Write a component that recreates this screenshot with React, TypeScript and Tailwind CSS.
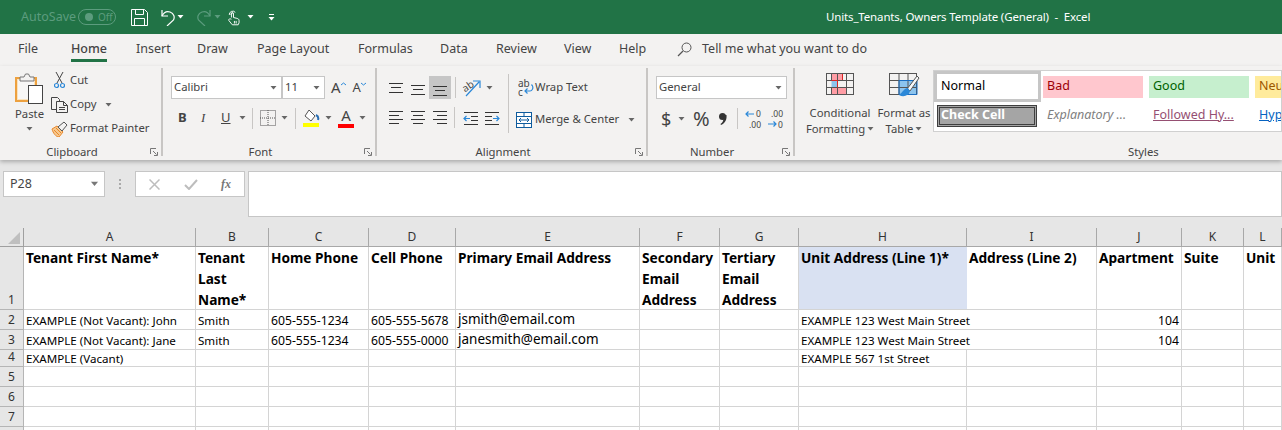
import React from "react";

const Caret = ({ c = "#666666", className = "" }: { c?: string; className?: string }) => (
  <svg width="7" height="4" viewBox="0 0 7 4" className={`shrink-0 ${className}`}><path d="M0.5 0h6L3.5 3.5z" fill={c} /></svg>
);

const Launcher = () => (
  <svg width="8" height="8" viewBox="0 0 8 8" fill="none" stroke="#777777" strokeWidth="1">
    <path d="M0.5 6V0.5H6" /><path d="M3 3l3.5 3.5M7.5 4v3.5H4" />
  </svg>
);

const Group = ({ w, label, children }: { w: string; label: string; children: React.ReactNode }) => (
  <div className={`${w} h-[88px] border-r-2 border-[#c8c6c4] flex flex-col shrink-0`}>
    <div className="h-[76px] flex overflow-hidden shrink-0">{children}</div>
    <div className="grid grid-cols-[1fr_auto_1fr_17px] items-center h-[12px] pt-[4px] leading-[8px] text-[#444444] shrink-0">
      <span />
      <span>{label}</span>
      <span />
      <span className="justify-self-end mr-[3px] flex"><Launcher /></span>
    </div>
  </div>
);

const Lines = ({ l, h = 16 }: { l: [number, number, number][]; h?: number }) => (
  <svg width="16" height={h} viewBox={`0 0 16 ${h}`} stroke="#333333" strokeWidth="1">
    {l.map((a, i) => <path key={i} d={`M${a[0]} ${a[1] + 0.5}h${a[2]}`} />)}
  </svg>
);

const Sep = ({ className = "" }: { className?: string }) => <div className={`w-px shrink-0 bg-[#c8c6c4] ${className}`} />;

const SaveIcon = () => (
  <svg width="17" height="17" viewBox="0 0 17 17" fill="none" stroke="#ffffff" strokeWidth="1">
    <path d="M0.5 0.5h13l3 3v13H0.5z" /><path d="M4.5 0.5v5h8v-5" /><path d="M3.5 16.5v-7h10v7" />
  </svg>
);

const UndoIcon = ({ c, flip }: { c: string; flip?: boolean }) => (
  <svg width="15" height="17" viewBox="0 0 15 17" fill="none" stroke={c} strokeWidth="1.2" className={flip ? "-scale-x-100" : ""}>
    <path d="M1 1v6h6" /><path d="M1 7C3 3 6 2 9 3c4 1.500 5 5 3.500 8L6 17" />
  </svg>
);

const TouchIcon = () => (
  <svg width="12" height="17" viewBox="0 0 14 18" fill="none" stroke="#ffffff" strokeWidth="1.100">
    <path d="M1.500 6a4 4 0 0 1 7-3" />
    <path d="M3 5.500a2 2 0 0 1 3.500-1" />
    <path d="M4 9V4.500a1.200 1.200 0 0 1 2.400 0V9l4 1c1.500.4 2.500 1 2.500 2.500V15l-1 2.500H5L1 12.500c-.8-1.500 1-2.500 3-1.500" />
    <path d="M7.500 13v3M9.500 13v3" />
  </svg>
);

const PasteIcon = () => (
  <svg width="29" height="31" viewBox="0 0 29 31" fill="none">
    <rect x="1" y="5" width="20" height="23" fill="#fbe3bd" stroke="#eda13f" strokeWidth="2" />
    <rect x="3" y="7" width="16" height="19" fill="#f8f7f6" />
    <path d="M5 8V4h4l1.500-3h3L15 4h4v4z" fill="#f3f2f1" stroke="#777777" />
    <rect x="13.500" y="12.500" width="14" height="18" fill="#ffffff" stroke="#444444" />
  </svg>
);

const CutIcon = () => (
  <svg width="11" height="17" viewBox="0 0 11 17" fill="none">
    <path d="M3 11L9 0M8 11L2 0" stroke="#444444" />
    <circle cx="2.500" cy="13.500" r="2" stroke="#2b88d8" strokeWidth="1.200" />
    <circle cx="8.500" cy="13.500" r="2" stroke="#2b88d8" strokeWidth="1.200" />
  </svg>
);

const CopyIcon = () => (
  <svg width="17" height="16" viewBox="0 0 17 16" fill="none" stroke="#444444">
    <path d="M5.500 12.500H.5V.5h6l2 2V5" />
    <path d="M5.500 4.500h7l4 4v7h-11z" />
    <path d="M12.500 4.500v4h4M8 10.500h6M8 12.500h6" />
  </svg>
);

const PainterIcon = () => (
  <svg width="17" height="16" viewBox="0 0 17 16" fill="none">
    <path d="M1 8l5-3 6 6-4 5c-3 0-6-4-7-8z" fill="#f6c88e" stroke="#e8872b" />
    <path d="M7 6l6-5 3 3-5 6z" fill="#f3f2f1" stroke="#555555" />
    <path d="M3 9l5 5M5 7l5 5" stroke="#e8872b" />
  </svg>
);

const BorderIcon = () => (
  <svg width="16" height="16" viewBox="0 0 16 16" fill="none" stroke="#555555" strokeDasharray="1 1">
    <rect x=".5" y=".5" width="15" height="15" /><path d="M8 0v16M0 8h16" />
  </svg>
);

const FillIcon = () => (
  <svg width="17" height="18" viewBox="0 0 17 18" fill="none">
    <path d="M6 1l6 6-4 5-6-5z" fill="#ffffff" stroke="#555555" />
    <path d="M13 6c2 1 3 2 2 5" stroke="#2b6fb3" strokeWidth="2" />
    <rect x="0" y="14" width="16" height="4" fill="#ffff00" />
  </svg>
);

const OrientIcon = () => (
  <svg width="18" height="18" viewBox="0 0 18 18" fill="none" className="overflow-visible">
    <text x="0" y="11" fontSize="10" fill="#444444" fontFamily="Noto Sans" transform="rotate(-35 5 9)">ab</text>
    <path d="M3 17L16 3M10 2h7v7" stroke="#2b88d8" strokeWidth="1.200" />
  </svg>
);

const WrapIcon = () => (
  <svg width="16" height="20" viewBox="0 0 16 20" fill="none">
    <text x="0" y="9" fontSize="10" fill="#444444" fontFamily="Noto Sans">ab</text>
    <text x="0" y="18" fontSize="10" fill="#444444" fontFamily="Noto Sans">c</text>
    <path d="M13 7h1c2 3 0 6-2 6H7M9.500 10.500L7 13l2.500 2.500" stroke="#2b88d8" strokeWidth="1.200" />
  </svg>
);

const MergeIcon = () => (
  <svg width="16" height="16" viewBox="0 0 16 16" fill="none">
    <rect x=".5" y=".5" width="15" height="15" fill="#ffffff" stroke="#0e5c9e" />
    <path d="M0 4.500h16M0 11.500h16M8 0v4M8 12v4" stroke="#0e5c9e" />
    <path d="M3 8h10M5 6L3 8l2 2M11 6l2 2-2 2" stroke="#0e5c9e" />
  </svg>
);

const IndentIcon = ({ flip }: { flip?: boolean }) => (
  <svg width="15" height="14" viewBox="0 0 15 14" fill="none" className={flip ? "-scale-x-100" : ""}>
    <path d="M1 1.500h14M8 5.500h7M8 9.500h7M1 13.500h14" stroke="#333333" />
    <path d="M7 7.500H1M3.500 5L1 7.500 3.500 10" stroke="#2b88d8" strokeWidth="1.200" />
  </svg>
);

const DecIcon = ({ up }: { up?: boolean }) => (
  <svg width="18" height="20" viewBox="0 0 18 20" fill="none">
    <text x={up ? 4 : 11} y="8" fontSize="8.500" fill="#444444" fontFamily="Noto Sans">{up ? ".00" : "0"}</text>
    <text x={up ? 11 : 4} y="19" fontSize="8.500" fill="#444444" fontFamily="Noto Sans">{up ? "0" : ".00"}</text>
    {up
      ? <path d="M1 15h8M6.500 12.500L9 15l-2.500 2.500" stroke="#2b88d8" strokeWidth="1.200" />
      : <path d="M9 5H1M3.500 2.500L1 5l2.500 2.500" stroke="#2b88d8" strokeWidth="1.200" />}
  </svg>
);

const CommaIcon = () => (
  <svg width="8" height="12" viewBox="0 0 8 12" fill="#333333">
    <circle cx="3.500" cy="3.500" r="3.500" />
    <path d="M4 2h3.500C8 6 6.500 10 2 12l-.5-1C4 9.500 4.500 7 4.500 5z" />
  </svg>
);

const CondIcon = () => (
  <svg width="28" height="23" viewBox="0 0 28 23" fill="none">
    <rect x="5.500" y=".5" width="11" height="7" fill="#ff9da5" stroke="#dc2626" />
    <rect x="5.500" y="7.500" width="6" height="7" fill="#8cc4ee" />
    <rect x="5.500" y="14.500" width="15" height="7" fill="#ff9da5" stroke="#dc2626" />
    <rect x=".5" y=".5" width="27" height="21" stroke="#555555" />
    <path d="M5.500 0v8M5.500 14v8M11.500 0v22M20.500 0v22M0 7.500h28M0 14.500h28" stroke="#555555" />
    <path d="M5.500 7.500h6v7" stroke="#dc2626" />
  </svg>
);

const TableIcon = () => (
  <svg width="31" height="27" viewBox="0 0 31 27" fill="none">
    <rect x="10" y="7" width="18" height="15" fill="#8cc4ee" />
    <rect x=".5" y=".5" width="27" height="21" stroke="#555555" />
    <path d="M10 0v22M19 0v22M0 7.500h28M0 14.500h28" stroke="#555555" />
    <path d="M10 7.500h18v14H10z" stroke="#1b6ec2" />
    <path d="M18 16L28 3l2 2-9 13z" fill="#f8f8f8" stroke="#555555" />
    <path d="M19 15c-4 0-5 4-9 7 5 3 10 0 11-4z" fill="#2b88d8" />
  </svg>
);

const TITLE_DIM = "#5c9c7e";

const TitleBar = () => (
  <div className="h-[34px] bg-[#217346] flex items-center shrink-0 text-white">
    <span className="ml-[21px] w-[57px] text-[12.500px] text-[#5c9c7e]">AutoSave</span>
    <div className="w-[38px] h-[16px] rounded-full border border-[#5c9c7e] flex items-center pl-[6px] text-[10px] text-[#5c9c7e]">
      <span className="w-[8px] h-[8px] rounded-full bg-[#5c9c7e] mr-[5px]" />Off
    </div>
    <div className="ml-[15px] flex"><SaveIcon /></div>
    <div className="ml-[13px] flex"><UndoIcon c="#ffffff" /></div>
    <Caret c="#ffffff" className="ml-[1px]" />
    <div className="ml-[12px] flex"><UndoIcon c={TITLE_DIM} flip /></div>
    <Caret c={TITLE_DIM} className="ml-[3px]" />
    <div className="ml-[7px] flex"><TouchIcon /></div>
    <Caret c="#ffffff" className="ml-[7px]" />
    <div className="ml-[14px] flex flex-col items-center gap-[2px]">
      <div className="w-[5px] h-px bg-white" />
      <Caret c="#ffffff" />
    </div>
    <span className="ml-[551px] text-[11.500px] tracking-[-0.15px] whitespace-pre">Units_Tenants, Owners Template (General)  -  Excel</span>
  </div>
);

const tabs: [string, string][] = [
  ["File", "w-[53px]"], ["Home", "w-[65px]"], ["Insert", "w-[61px]"], ["Draw", "w-[60px]"],
  ["Page Layout", "w-[101px]"], ["Formulas", "w-[82px]"], ["Data", "w-[56px]"], ["Review", "w-[68px]"],
  ["View", "w-[55px]"], ["Help", "w-[58px]"],
];

const Tabs = () => (
  <div className="h-[32px] bg-[#f3f2f1] flex items-start pl-[18px] text-[12.500px] text-[#444444] shrink-0">
    {tabs.map(([t, w]) => (
      <div key={t} className={`${w} h-[30px] flex items-center`}>
        {t === "Home" ? (
          <span className="self-start h-[28px] flex items-center font-medium border-b-[3px] border-[#217346] pt-[5px]">Home</span>
        ) : t}
      </div>
    ))}
    <div className="h-[30px] flex items-center">
      <svg width="15" height="15" viewBox="0 0 15 15" fill="none" stroke="#555555" className="mr-[10px]">
        <circle cx="9.500" cy="5.500" r="4.500" /><path d="M6 9l-5 5" strokeWidth="1.300" />
      </svg>
      Tell me what you want to do
    </div>
  </div>
);

const Combo = ({ text, w }: { text: string; w: string }) => (
  <div className={`${w} h-[23px] bg-white border border-[#c6c6c6] flex items-center justify-between pl-[2px] pr-[4px] text-[#444444] shrink-0`}>
    <span>{text}</span><Caret />
  </div>
);

const Ribbon = () => (
  <div className="h-[94px] bg-[#f3f2f1] flex items-start pt-[2px] shrink-0 relative z-10 shadow-[0_2px_4px_rgba(0,0,0,0.25)] text-[11.300px] text-[#444444] whitespace-nowrap">
    <Group w="w-[163px]" label="Clipboard">
      <div className="ml-[14px] w-[31px] flex flex-col items-center pt-[5px]">
        <PasteIcon />
        <span className="mt-[2px] leading-[16px]">Paste</span>
        <Caret className="mt-[5px]" />
      </div>
      <div className="ml-[6px] pt-[4px] flex flex-col gap-[7px]">
        <div className="h-[17px] flex items-center"><div className="ml-[3px] w-[16px] flex"><CutIcon /></div>Cut</div>
        <div className="h-[17px] flex items-center"><div className="w-[19px] flex"><CopyIcon /></div>Copy<Caret className="ml-[9px]" /></div>
        <div className="h-[17px] flex items-center"><div className="w-[19px] flex"><PainterIcon /></div>Format Painter</div>
      </div>
    </Group>

    <Group w="w-[214px]" label="Font">
      <div className="pl-[8px] pt-[8px] flex flex-col">
        <div className="flex items-center">
          <Combo text="Calibri" w="w-[111px]" />
          <Combo text="11" w="w-[43px]" />
          <span className="ml-[6px] text-[15px] leading-[15px]">A</span>
          <svg width="5" height="4" viewBox="0 0 5 4" className="mb-[8px]"><path d="M0 3l2.500-2L5 3" stroke="#2b88d8" fill="none" /></svg>
          <span className="ml-[7px] text-[13px] leading-[15px]">A</span>
          <svg width="5" height="4" viewBox="0 0 5 4" className="mb-[8px]"><path d="M0 1l2.500 2L5 1" stroke="#2b88d8" fill="none" /></svg>
        </div>
        <div className="flex items-center h-[22px] mt-[8px]">
          <span className="ml-[7px] w-[23px] font-bold text-[13px]">B</span>
          <span className="w-[20px] italic text-[13px] font-['Liberation_Serif',serif]">I</span>
          <span className="w-[18px] underline text-[13px]">U</span>
          <Caret />
          <Sep className="h-[21px] ml-[6px]" />
          <div className="ml-[7px] flex"><BorderIcon /></div>
          <Caret className="ml-[5px]" />
          <Sep className="h-[21px] ml-[7px]" />
          <div className="ml-[7px] flex"><FillIcon /></div>
          <Caret className="ml-[5px]" />
          <div className="ml-[6px] w-[16px] flex flex-col items-center">
            <span className="text-[15px] leading-[15px] h-[15px]">A</span>
            <div className="w-[16px] h-[4px] bg-[#ff0000] mt-[1px]" />
          </div>
          <Caret className="ml-[5px]" />
        </div>
      </div>
    </Group>

    <Group w="w-[271px]" label="Alignment">
      <div className="ml-[11px] pt-[8px] flex flex-col w-[112px]">
        <div className="flex items-center h-[23px]">
          <div className="w-[22px] flex"><Lines l={[[1, 3, 14], [3, 7, 10], [1, 12, 14]]} /></div>
          <div className="w-[19px] flex"><Lines l={[[1, 6, 14], [3, 10, 10], [1, 15, 14]]} h={18} /></div>
          <div className="w-[22px] h-[23px] bg-[#c6c6c6] flex items-center justify-center"><Lines l={[[1, 6, 14], [3, 10, 10], [1, 15, 14]]} h={16} /></div>
          <Sep className="h-[21px] ml-[4px]" />
          <div className="ml-[7px] flex"><OrientIcon /></div>
          <Caret className="ml-[5px]" />
        </div>
        <div className="flex items-center h-[23px] mt-[7px]">
          <div className="w-[22px] flex"><Lines l={[[1, 1, 14], [1, 5, 10], [1, 9, 14], [1, 13, 10]]} /></div>
          <div className="w-[22px] flex"><Lines l={[[1, 1, 14], [3, 5, 10], [1, 9, 14], [3, 13, 10]]} /></div>
          <div className="w-[22px] flex"><Lines l={[[1, 1, 14], [5, 5, 10], [1, 9, 14], [5, 13, 10]]} /></div>
          <Sep className="h-[21px]" />
          <div className="ml-[8px] flex"><IndentIcon /></div>
          <div className="ml-[7px] flex"><IndentIcon flip /></div>
        </div>
      </div>
      <Sep className="h-[59px] mt-[6px] ml-[8px]" />
      <div className="ml-[7px] pt-[8px] flex flex-col">
        <div className="h-[23px] flex items-center"><div className="w-[17px] ml-[2px] flex"><WrapIcon /></div>Wrap Text</div>
        <div className="h-[23px] mt-[9px] flex items-center"><div className="w-[19px] flex"><MergeIcon /></div>Merge &amp; Center<Caret className="ml-[9px]" /></div>
      </div>
    </Group>

    <Group w="w-[147px]" label="Number">
      <div className="ml-[8px] pt-[8px] flex flex-col">
        <Combo text="General" w="w-[131px]" />
        <div className="flex items-center h-[23px] mt-[8px]">
          <span className="ml-[5px] w-[17px] text-[18px] leading-[20px]">$</span>
          <Caret />
          <span className="ml-[8px] w-[26px] text-[20px] leading-[20px]">%</span>
          <div className="w-[18px] flex"><CommaIcon /></div>
          <Sep className="h-[21px]" />
          <div className="ml-[7px] flex"><DecIcon /></div>
          <div className="ml-[4px] flex"><DecIcon up /></div>
        </div>
      </div>
    </Group>

    <div className="h-[88px] flex-1 flex flex-col min-w-0">
      <div className="h-[76px] flex overflow-hidden shrink-0">
        <div className="w-[68px] ml-[11px] mt-[5px] flex flex-col items-center">
          <CondIcon />
          <span className="mt-[9px] leading-[16px]">Conditional</span>
          <span className="leading-[16px] flex items-center gap-[2px]">Formatting<Caret /></span>
        </div>
        <div className="w-[54px] ml-[3px] mt-[5px] flex flex-col items-center">
          <TableIcon />
          <span className="mt-[5px] leading-[16px]">Format as</span>
          <span className="leading-[16px] flex items-center gap-[2px]">Table<Caret /></span>
        </div>
        <div className="ml-[2px] mt-[2px] h-[62px] flex-1 bg-white border border-[#d0d0d0] overflow-hidden text-[12.500px]">
          <div className="flex items-center h-[31px] w-[600px]">
            <div className="w-[107px] h-[31px] shrink-0 border-[3px] border-[#c6c6c6] flex items-center pl-[4px] text-black">Normal</div>
            <div className="ml-[2px] w-[100px] h-[22px] shrink-0 bg-[#ffc7ce] text-[#9c0006] flex items-center pl-[4px]">Bad</div>
            <div className="ml-[6px] w-[100px] h-[22px] shrink-0 bg-[#c6efce] text-[#006100] flex items-center pl-[4px]">Good</div>
            <div className="ml-[6px] w-[100px] h-[22px] shrink-0 bg-[#ffeb9c] text-[#9c5700] flex items-center pl-[4px]">Neutral</div>
          </div>
          <div className="flex items-center h-[22px] mt-[3px] ml-[3px] w-[600px]">
            <div className="w-[100px] h-[22px] shrink-0 bg-[#a5a5a5] border-[3px] border-double border-[#3f3f3f] text-white font-bold flex items-center pl-[1px] pb-[1px]">Check Cell</div>
            <div className="ml-[6px] w-[100px] shrink-0 italic text-[#7f7f7f] pl-[4px] pb-[2px]">Explanatory ...</div>
            <div className="ml-[6px] w-[100px] shrink-0 underline text-[#954f72] pl-[4px] pb-[2px]">Followed Hy...</div>
            <div className="ml-[6px] w-[100px] shrink-0 underline text-[#0563c1] pl-[4px] pb-[2px]">Hyperlink</div>
          </div>
        </div>
      </div>
      <div className="h-[12px] pt-[4px] leading-[8px] pl-[333px] shrink-0">Styles</div>
    </div>
  </div>
);

const FormulaBar = () => (
  <div className="h-[68px] bg-[#e6e6e6] flex items-start pt-[11px] pl-[3px] shrink-0">
    <div className="w-[102px] h-[26px] bg-white border border-[#c6c6c6] flex items-center justify-between pl-[6px] pr-[6px] text-[12.500px] text-[#444444]">
      P28<Caret c="#777777" className="scale-125" />
    </div>
    <div className="w-[30px] h-[26px] flex flex-col items-center justify-center gap-[2px]">
      <span className="w-[2px] h-[2px] bg-[#aaaaaa]" /><span className="w-[2px] h-[2px] bg-[#aaaaaa]" /><span className="w-[2px] h-[2px] bg-[#aaaaaa]" />
    </div>
    <div className="w-[110px] h-[26px] bg-white border border-[#c6c6c6] flex items-center shrink-0">
      <svg width="11" height="11" viewBox="0 0 11 11" className="ml-[13px]" stroke="#bdbdbd" strokeWidth="1.500"><path d="M0.500 0.500l10 10M10.500 0.500l-10 10" /></svg>
      <svg width="14" height="11" viewBox="0 0 14 11" className="ml-[24px]" stroke="#bdbdbd" strokeWidth="2" fill="none"><path d="M1 6l4 4 8-9" /></svg>
      <span className="ml-[23px] text-[12px] italic font-bold text-[#777777] font-['Liberation_Serif',serif]">fx</span>
    </div>
    <div className="ml-[3px] flex-1 h-[46px] bg-white border border-[#c6c6c6]" />
  </div>
);

const cols = ["A", "B", "C", "D", "E", "F", "G", "H", "I", "J", "K", "L"];
const rowHeights = ["h-[63px]", "h-[20px]", "h-[20px]", "h-[17px]", "h-[20px]", "h-[20px]", "h-[20px]", "h-[20px]"];
const head = ["Tenant First Name*", "Tenant Last Name*", "Home Phone", "Cell Phone", "Primary Email Address", "Secondary Email Address", "Tertiary Email Address", "Unit Address (Line 1)*", "Address (Line 2)", "Apartment", "Suite", "Unit"];
const r2 = ["EXAMPLE (Not Vacant): John", "Smith", "605-555-1234", "605-555-5678", "jsmith@email.com", "", "", "EXAMPLE 123 West Main Street", "", "104", "", ""];
const r3 = ["EXAMPLE (Not Vacant): Jane", "Smith", "605-555-1234", "605-555-0000", "janesmith@email.com", "", "", "EXAMPLE 123 West Main Street", "", "104", "", ""];
const r4 = ["EXAMPLE (Vacant)", "", "", "", "", "", "", "EXAMPLE 567 1st Street", "", "", "", ""];
const blank = cols.map(() => "");
const rows = [head, r2, r3, r4, blank, blank, blank, blank];

const bodySize = ["text-[11.600px] pt-[1px]", "text-[11.600px] pt-[1px]", "text-[12.200px] pt-[1px]", "text-[12.200px] pt-[1px]", "text-[13.500px]", "text-[11.600px]", "text-[11.600px]", "text-[11.600px] pt-[1px]", "text-[11.600px]", "text-[12.200px] pt-[1px]", "text-[11.600px]", "text-[11.600px]"];

const Sheet = () => (
  <div className="flex-1 bg-white overflow-hidden grid grid-cols-[24px_172px_73px_100px_87px_184px_80px_79px_168px_130px_85px_62px_38px] content-start text-black">
    <div className="h-[19px] bg-[#e6e6e6] border-r border-b border-[#9f9f9f] flex items-start pl-[8px] pt-[4px]">
      <svg width="12" height="12" viewBox="0 0 12 12"><path d="M12 0v12H0z" fill="#bfbfbf" /></svg>
    </div>
    {cols.map((c) => (
      <div key={c} className="h-[19px] bg-[#e6e6e6] border-r border-b border-[#a8a8a8] flex items-center justify-center text-[12px] text-[#333333]">{c}</div>
    ))}
    {rows.map((row, ri) => (
      <React.Fragment key={ri}>
        <div className={`${rowHeights[ri]} bg-[#e6e6e6] border-r border-b border-[#b5b5b5] flex items-end justify-center text-[12px] text-[#333333] leading-[19px]`}>{ri + 1}</div>
        {row.map((t, ci) => {
          const isHead = ri === 0;
          const overflow = (ri === 1 || ri === 2) && ci === 7;
          return (
            <div
              key={ci}
              className={[
                rowHeights[ri],
                "border-b border-[#d4d4d4] px-[2px]",
                overflow || (isHead && ci === 7) ? "" : "border-r",
                isHead && ci === 7 ? "bg-[#d9e1f2]" : "",
                isHead ? "font-bold text-[13.700px] leading-[21px]" : `${bodySize[ci]} whitespace-nowrap`,
                !isHead ? (ri === 3 ? "leading-[16px]" : "leading-[19px]") : "",
                !isHead && ci === 9 ? "text-right" : "",
              ].join(" ")}
            >
              {t}
            </div>
          );
        })}
      </React.Fragment>
    ))}
  </div>
);

export default function App() {
  return (
    <div className="w-[1282px] h-[430px] overflow-hidden flex flex-col bg-[#e6e6e6] font-['Noto_Sans',sans-serif]">
      <TitleBar />
      <Tabs />
      <Ribbon />
      <FormulaBar />
      <Sheet />
    </div>
  );
}
